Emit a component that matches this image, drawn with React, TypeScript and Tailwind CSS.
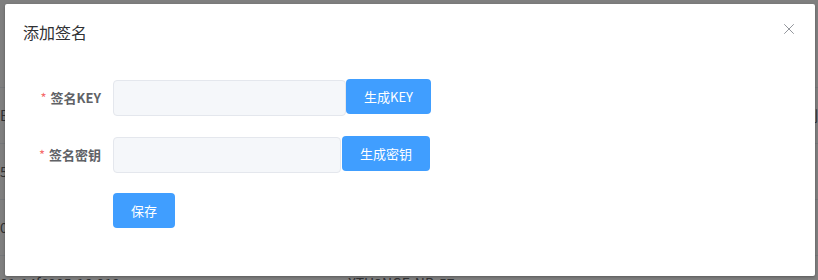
import { X } from 'lucide-react';

const rows = [
  { a: 'E', b: '', c: '制' },
  { a: '5', b: '', c: '' },
  { a: '0', b: '', c: '' },
  { a: '01-14f6905-16-919', b: 'XTU3NGE-NB-57', c: '' },
];

const App = () => {
  return (
    <div
      className="relative w-[818px] h-[280px] overflow-hidden bg-white"
      style={{ fontFamily: '"Noto Sans CJK SC", "Liberation Sans", sans-serif' }}
    >
      {/* page behind the dialog */}
      <div className="pt-[87px] text-[14px] text-[#606266]">
        {rows.map((r, i) => (
          <div key={i} className="flex h-[56px] items-center border-t border-[#ebeef5]">
            <div className="w-[348px] pl-0">{r.a}</div>
            <div className="w-[467px]">{r.b}</div>
            <div className="flex-1">{r.c}</div>
          </div>
        ))}
      </div>

      <div className="absolute inset-0 bg-black/50" />

      {/* dialog */}
      <div className="absolute left-[5px] top-[4px] w-[810px] h-[272px] bg-white rounded-[2px] shadow-[0_1px_3px_rgba(0,0,0,0.3)]">
        <div className="pl-[18px] pt-[16px] h-[50px]">
          <span className="text-[16px] leading-6 text-[#303133]">添加签名</span>
        </div>
        <button className="absolute right-[17px] top-[16px] text-[#909399]">
          <X className="w-[18px] h-[18px]" strokeWidth={1.3} />
        </button>

        <div className="pt-[26px] flex flex-col">
          <div className="flex items-start mb-[21px]">
            <label className="w-[108px] h-9 pr-3 flex items-center justify-end text-[13px] font-bold text-[#606266]">
              <span className="text-[#f56c6c] mr-1 font-normal">*</span>签名KEY
            </label>
            <div className="w-[233px] h-9 bg-[#f5f7fa] border border-[#e4e7ed] rounded" />
            <button className="-mt-px w-[85px] h-[35px] bg-[#409eff] text-white text-[13px] rounded">
              生成KEY
            </button>
          </div>

          <div className="flex items-start mb-[20px]">
            <label className="w-[108px] h-9 pr-3 flex items-center justify-end text-[13px] font-bold text-[#606266]">
              <span className="text-[#f56c6c] mr-1 font-normal">*</span>签名密钥
            </label>
            <div className="w-[228px] h-9 bg-[#f5f7fa] border border-[#e4e7ed] rounded" />
            <button className="-mt-px ml-px w-[88px] h-[35px] bg-[#409eff] text-white text-[13px] rounded">
              生成密钥
            </button>
          </div>

          <div className="flex">
            <div className="w-[108px]" />
            <button className="w-[62px] h-[35px] bg-[#409eff] text-white text-[13px] rounded">
              保存
            </button>
          </div>
        </div>
      </div>
    </div>
  );
};

export default App;
